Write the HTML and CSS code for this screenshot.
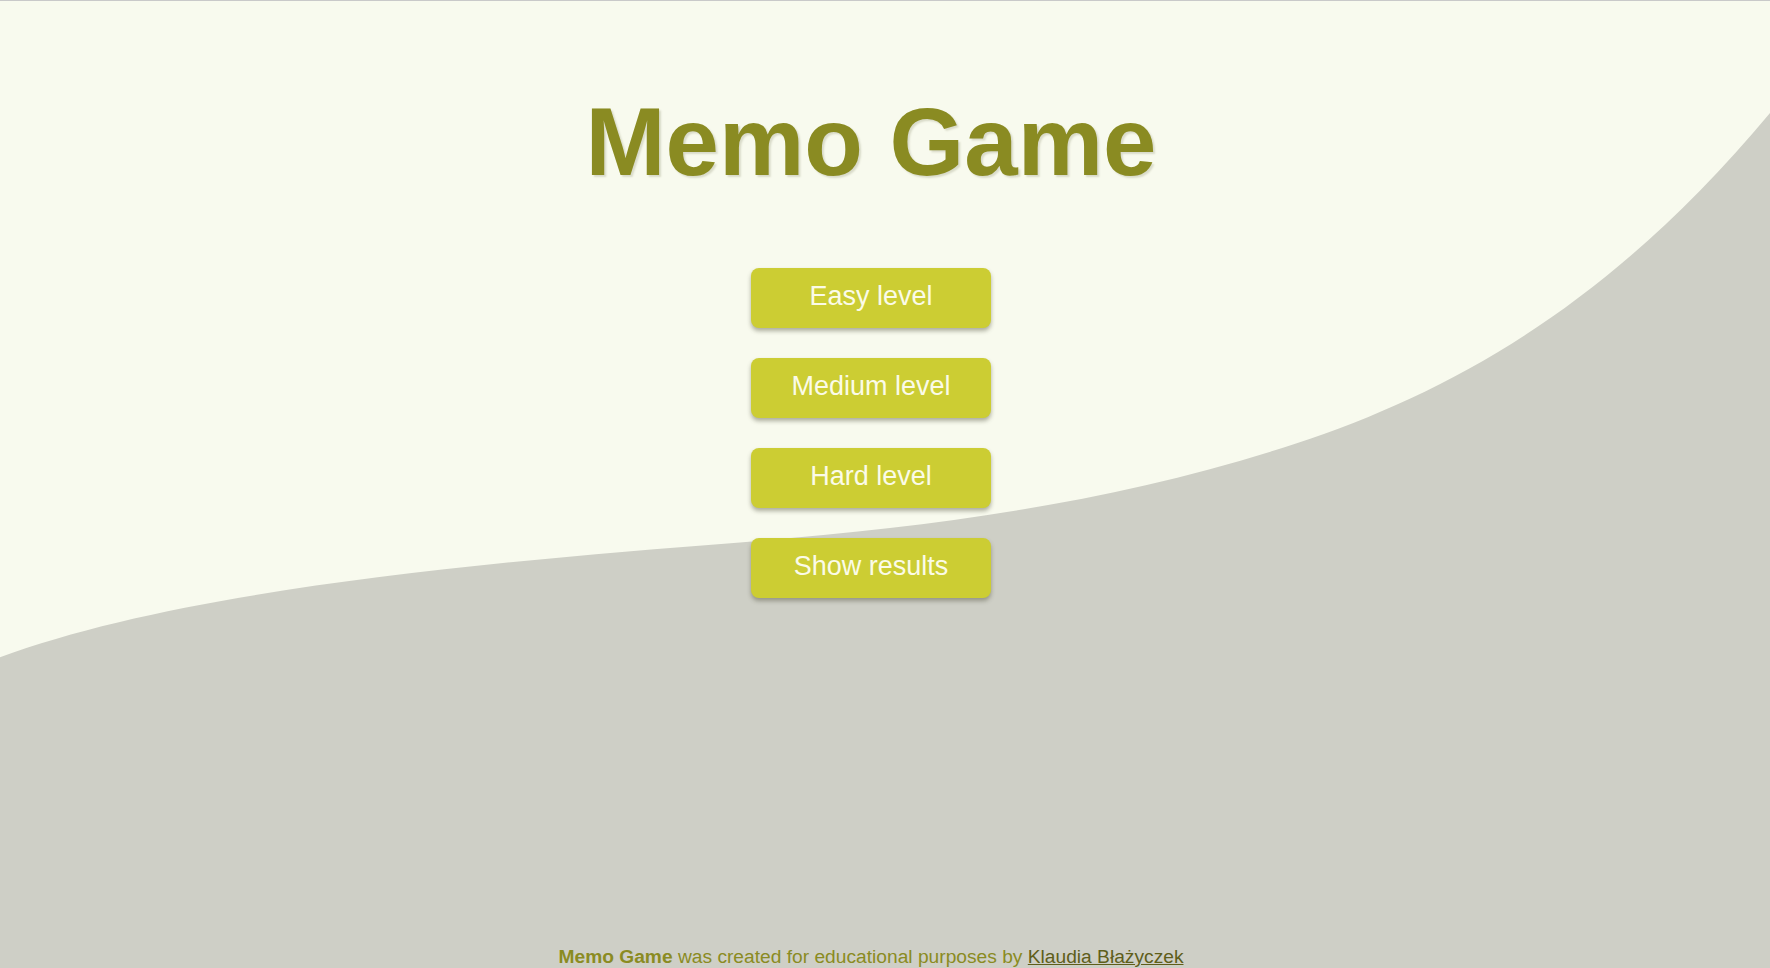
FILE: index.html
```html
<!DOCTYPE html>
<html lang="en">
<head>
<meta charset="utf-8">
<title>Memo Game</title>
<link rel="stylesheet" href="styles.css">
</head>
<body>
<div class="page">
  <svg class="wave" viewBox="0 0 1770 968" preserveAspectRatio="none" aria-hidden="true">
    <path d="M0,657 C180,590 480,562 740,542 C925,527 1111,504 1296,443 C1454,391 1612,302 1770,112 L1770,968 L0,968 Z" fill="#cecfc6"/>
  </svg>
  <main class="content">
    <h1 class="title">Memo Game</h1>
    <nav class="menu">
      <button class="btn" type="button">Easy level</button>
      <button class="btn" type="button">Medium level</button>
      <button class="btn" type="button">Hard level</button>
      <button class="btn" type="button">Show results</button>
    </nav>
  </main>
  <footer class="footer">
    <strong>Memo Game</strong> was created for educational purposes by <a href="#" class="author">Klaudia Błażyczek</a>
  </footer>
</div>
</body>
</html>
```
FILE: styles.css
```css
html, body {
  margin: 0;
  padding: 0;
  height: 100%;
}
body {
  background: #f8faee;
  font-family: "Liberation Sans", Arial, Helvetica, sans-serif;
  overflow: hidden;
}
.page {
  position: relative;
  height: 100vh;
  box-sizing: border-box;
  border-top: 1px solid #c9c9c9;
  padding-right: 28px;
  display: flex;
  flex-direction: column;
  align-items: center;
}
.wave {
  position: absolute;
  left: 0;
  top: 0;
  width: 100%;
  height: 100%;
  z-index: 0;
  display: block;
}
.content {
  position: relative;
  z-index: 1;
  display: flex;
  flex-direction: column;
  align-items: center;
}
.title {
  margin: 86px 0 0;
  font-size: 96px;
  font-weight: bold;
  line-height: 110px;
  color: #8a8b22;
  text-shadow: 2px 2px 2px #d9dbc9;
  letter-spacing: 0;
}
.menu {
  margin-top: 71px;
  display: flex;
  flex-direction: column;
  gap: 30px;
}
.btn {
  width: 240px;
  height: 60px;
  box-sizing: border-box;
  padding: 0 0 5px;
  border: none;
  border-radius: 8px;
  background: #cccd33;
  color: #fbfbe8;
  font-family: "Liberation Sans", Arial, Helvetica, sans-serif;
  font-size: 27px;
  line-height: 30px;
  box-shadow: 0 3px 4px rgba(80, 80, 60, 0.45);
  cursor: pointer;
}
.footer {
  position: relative;
  z-index: 1;
  margin-top: auto;
  padding-bottom: 0;
  font-size: 19.2px;
  line-height: 22px;
  color: #8a8b22;
}
.footer strong {
  font-weight: bold;
}
.author {
  color: #5e5e1a;
  text-decoration: underline;
}
```
